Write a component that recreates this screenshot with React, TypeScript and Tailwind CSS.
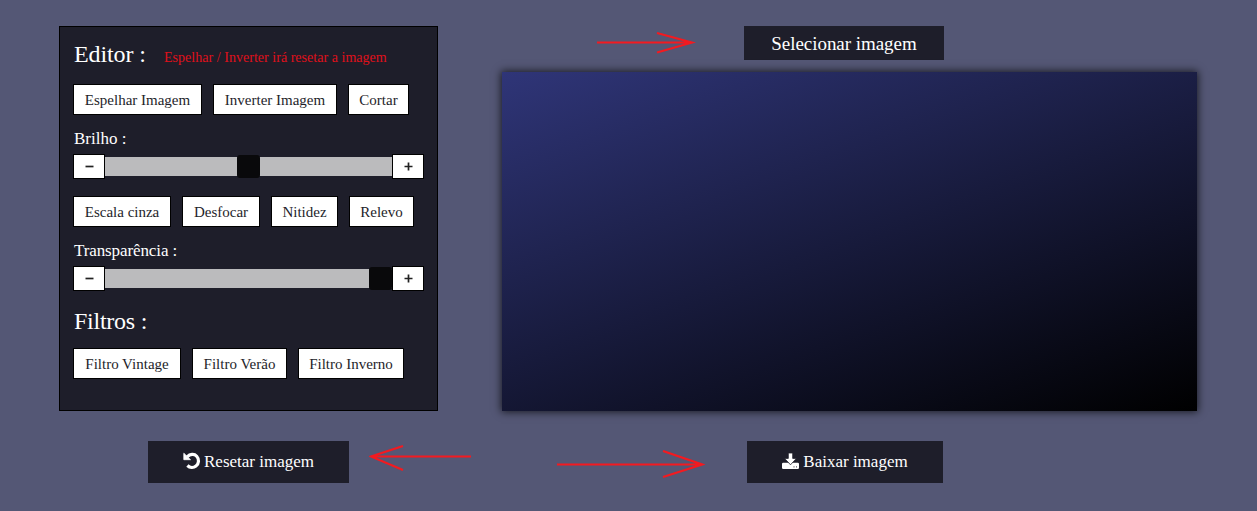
import type { ReactNode } from "react";

function Tool({ w, children }: { w: string; children: ReactNode }) {
  return (
    <button className={`h-[31px] shrink-0 whitespace-nowrap border border-black bg-white text-center text-[15px] leading-[30px] text-[#1e1e2a] ${w}`}>
      {children}
    </button>
  );
}

function Step({ plus }: { plus?: boolean }) {
  return (
    <button className="flex h-[25px] w-8 shrink-0 items-center justify-center border border-black bg-white">
      <svg width="9" height="9" viewBox="0 0 9 9" stroke="#222" strokeWidth="1.7">
        <path d={plus ? "M0.5 4.5H8.5M4.5 0.5V8.5" : "M0.5 4.5H8.5"} />
      </svg>
    </button>
  );
}

function Slider({ thumb }: { thumb: string }) {
  return (
    <div className="-ml-px flex h-[25px] w-[351px] items-center">
      <Step />
      <div className="flex h-[19px] flex-1 items-center bg-[#bbbbbd]">
        <div className={`h-[23px] w-[23px] shrink-0 rounded-[3px] bg-[#09090b] ${thumb}`} />
      </div>
      <Step plus />
    </div>
  );
}

function Arrow({ d, w, h, className }: { d: string; w: number; h: number; className: string }) {
  return (
    <svg width={w} height={h} viewBox={`0 0 ${w} ${h}`} fill="none" stroke="#f31a20" strokeWidth="2.2" className={`absolute ${className}`}>
      <path d={d} />
    </svg>
  );
}

export default function App() {
  return (
    <main className="relative flex h-[511px] w-[1257px] overflow-hidden bg-[#545775] pl-[58px] pt-[26px] font-['Liberation_Serif',serif] text-white">
      <div className="flex w-[380px] flex-col">
        <section className="ml-px h-[385px] border border-black bg-[#1e1e2a] pl-[14px]">
          <div className="flex h-[57px] items-baseline pt-[9px]">
            <h1 className="w-[90px] text-[24px] leading-9 tracking-[-0.1px]">Editor :</h1>
            <span className="whitespace-nowrap text-[14px] tracking-[0.03px] text-[#e0101a]">Espelhar / Inverter irá resetar a imagem</span>
          </div>
          <div className="-ml-px flex gap-[11px]">
            <Tool w="w-[129px]">Espelhar Imagem</Tool>
            <Tool w="w-[124px]">Inverter Imagem</Tool>
            <Tool w="w-[61px]">Cortar</Tool>
          </div>
          <h2 className="mt-3 h-[27px] text-[17px] leading-[24px]">Brilho :</h2>
          <Slider thumb="ml-[132px]" />
          <div className="-ml-px mt-[17px] flex gap-[11px]">
            <Tool w="w-[98px]">Escala cinza</Tool>
            <Tool w="w-[78px]">Desfocar</Tool>
            <Tool w="w-[67px]">Nitidez</Tool>
            <Tool w="w-[65px]">Relevo</Tool>
          </div>
          <h2 className="mt-3 h-[27px] text-[17px] leading-[24px] tracking-[-0.1px]">Transparência :</h2>
          <Slider thumb="ml-auto" />
          <h1 className="mt-3 h-[45px] text-[24px] leading-9 tracking-[-0.25px]">Filtros :</h1>
          <div className="-ml-px flex gap-[11px]">
            <Tool w="w-[108px]">Filtro Vintage</Tool>
            <Tool w="w-[95px]">Filtro Verão</Tool>
            <Tool w="w-[106px]">Filtro Inverno</Tool>
          </div>
        </section>
        <button className="ml-[90px] mt-[30px] flex h-[42px] w-[201px] items-center justify-center gap-[3px] bg-[#1e1e2a] text-[17px]">
          <svg width="18" height="18" viewBox="0 0 18 18" className="-mt-0.5">
            <path d="M4.2 4.8C7 1.8 11.2 1.4 13.7 4.2C16.4 7.2 16 11.8 13 14C10.4 16 6.8 15.8 4.4 13.5" fill="none" stroke="currentColor" strokeWidth="3.2" />
            <path d="M0.8 1.2V7.7H7.5Z" fill="currentColor" stroke="currentColor" strokeWidth="0.8" strokeLinejoin="round" />
          </svg>
          <span>Resetar imagem</span>
        </button>
      </div>
      <div className="ml-16 flex w-[695px] flex-col">
        <button className="ml-[242px] h-[34px] w-[200px] bg-[#1e1e2a] text-[19px] leading-[35px] tracking-[-0.05px]">Selecionar imagem</button>
        <div className="mt-3 h-[339px] bg-[linear-gradient(160deg,#2f3578,#000)] shadow-[0_0_8px_1px_rgba(0,0,0,0.7)]" />
        <button className="ml-[245px] mt-[30px] flex h-[42px] w-[196px] items-center justify-center gap-1 bg-[#1e1e2a] text-[17px]">
          <svg width="17" height="18" viewBox="0 0 17 18" className="-mt-0.5">
            <rect x="0" y="10.8" width="17" height="6.2" rx="1.2" fill="currentColor" />
            <path d="M6.3 1H10.7V6.4H14.4L8.5 12.8L2.6 6.4H6.3Z" fill="currentColor" stroke="#1e1e2a" strokeWidth="0.8" />
            <path d="M11.5 14.9H12.5M14 14.9H15" stroke="#1e1e2a" strokeWidth="0.9" />
          </svg>
          <span>Baixar imagem</span>
        </button>
      </div>
      <Arrow w={100} h={26} d="M1 13.5H96M61 4L96 13.5L61 23.5" className="left-[596px] top-[29px]" />
      <Arrow w={104} h={30} d="M102 15.5H2M34 5L2 15.5L34 29" className="left-[369px] top-[441px]" />
      <Arrow w={148} h={30} d="M0 14.5H145M106 1L145 14.5L106 27" className="left-[557px] top-[450px]" />
    </main>
  );
}
